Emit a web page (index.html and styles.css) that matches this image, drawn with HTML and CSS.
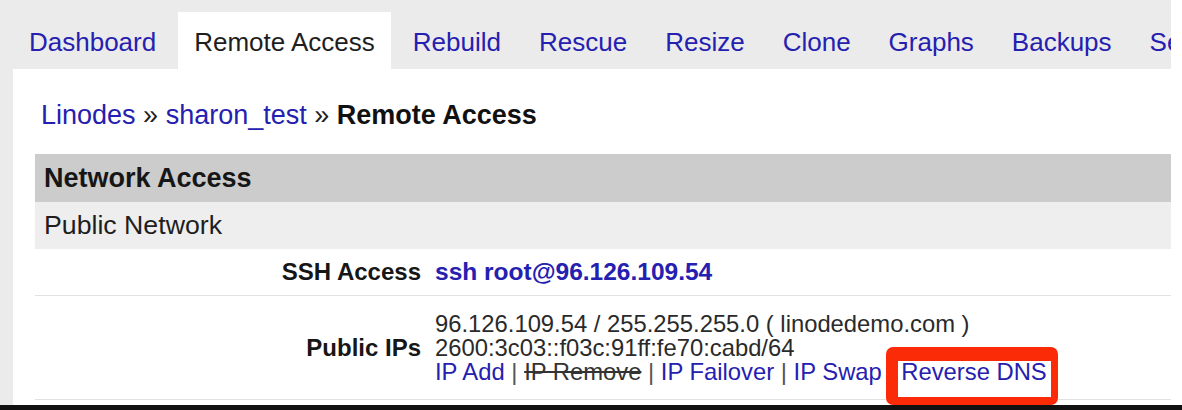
FILE: index.html
```html
<!DOCTYPE html>
<html>
<head>
<meta charset="utf-8">
<title>Remote Access</title>
<link rel="stylesheet" href="styles.css">
</head>
<body>
<div class="page">
  <nav class="tabs">
    <a class="tab" href="#">Dashboard</a>
    <a class="tab active" href="#">Remote Access</a>
    <a class="tab" href="#">Rebuild</a>
    <a class="tab" href="#">Rescue</a>
    <a class="tab" href="#">Resize</a>
    <a class="tab" href="#">Clone</a>
    <a class="tab" href="#">Graphs</a>
    <a class="tab" href="#">Backups</a>
    <a class="tab" href="#">Settings</a>
  </nav>
  <main class="panel">
    <div class="crumbs"><a href="#">Linodes</a> » <a href="#">sharon_test</a> » <strong>Remote Access</strong></div>
    <table class="grid">
      <tr class="head"><th colspan="2">Network Access</th></tr>
      <tr class="sub"><td colspan="2">Public Network</td></tr>
      <tr class="row ssh">
        <th class="label">SSH Access</th>
        <td class="value"><a class="strong" href="#">ssh root@96.126.109.54</a></td>
      </tr>
      <tr class="row ips">
        <th class="label">Public IPs</th>
        <td class="value">
          <div class="line">96.126.109.54 / 255.255.255.0 ( linodedemo.com )</div>
          <div class="line">2600:3c03::f03c:91ff:fe70:cabd/64</div>
          <div class="line"><a href="#">IP Add</a> <span class="sep">|</span> <span class="off">IP Remove</span> <span class="sep">|</span> <a href="#">IP Failover</a> <span class="sep">|</span> <a href="#">IP Swap</a> <span class="sep">|</span> <a class="rdns" href="#">Reverse DNS</a></div>
        </td>
      </tr>
    </table>
  </main>
</div>
<div class="rule"></div>
</body>
</html>
```
FILE: styles.css
```css
html, body {
  margin: 0;
  padding: 0;
  background: #ffffff;
}
body {
  font-family: "Liberation Sans", Arial, Helvetica, sans-serif;
  color: #1e1e1e;
  overflow: hidden;
}
a {
  color: #2520b0;
  text-decoration: none;
}
.page {
  width: 1171px;
  background: #ebebeb;
}
.tabs {
  display: flex;
  height: 69px;
  padding: 12px 0 0 10px;
  box-sizing: border-box;
  white-space: nowrap;
  overflow: hidden;
}
.tab {
  flex: none;
  height: 57px;
  line-height: 61px;
  padding: 0 19px;
  font-size: 26px;
}
.tab.active {
  background: #ffffff;
  color: #1e1e1e;
  padding: 0 16px 0 16px;
  margin-right: 3px;
  margin-left: 3px;
}
.panel {
  display: block;
  margin-left: 13px;
  background: #ffffff;
  padding: 31px 0 5px 22px;
}
.crumbs {
  font-size: 27px;
  line-height: 30px;
  padding-left: 6px;
  margin-bottom: 24px;
  color: #1e1e1e;
}
.crumbs strong {
  color: #111;
}
.grid {
  width: 100%;
  border-collapse: collapse;
  font-size: 24px;
}
.grid th, .grid td {
  padding: 0;
}
.head th {
  background: #cccccc;
  text-align: left;
  font-weight: bold;
  font-size: 27px;
  height: 48px;
  padding: 0 9px;
  color: #161616;
}
.sub td {
  background: #eeeeee;
  height: 47px;
  font-size: 26.7px;
  padding: 0 9px;
}
.row th, .row td {
  border-bottom: 1px solid #e2e2e2;
}
.label {
  width: 386px;
  text-align: right;
  padding-right: 7px !important;
  font-weight: bold;
  font-size: 24px;
  color: #161616;
}
.value {
  padding-left: 7px !important;
}
.ssh th, .ssh td {
  height: 46px;
}
.strong {
  font-weight: bold;
  font-size: 24.5px;
}
.ips td {
  padding-top: 16px !important;
  padding-bottom: 15px !important;
}
.line {
  font-size: 23.8px;
  line-height: 24px;
  color: #2a2a2a;
  white-space: nowrap;
}
.sep {
  color: #555;
}
.off {
  color: #333;
  text-decoration: line-through;
}
.rdns {
  position: relative;
}
.rdns::before {
  content: "";
  position: absolute;
  left: -15px;
  right: -11px;
  top: -11px;
  bottom: -20px;
  border-style: solid;
  border-color: #fb2b08;
  border-width: 14px 7px 8px 12px;
  border-radius: 7px;
}
.rule {
  height: 5px;
  background: #111;
}
```
